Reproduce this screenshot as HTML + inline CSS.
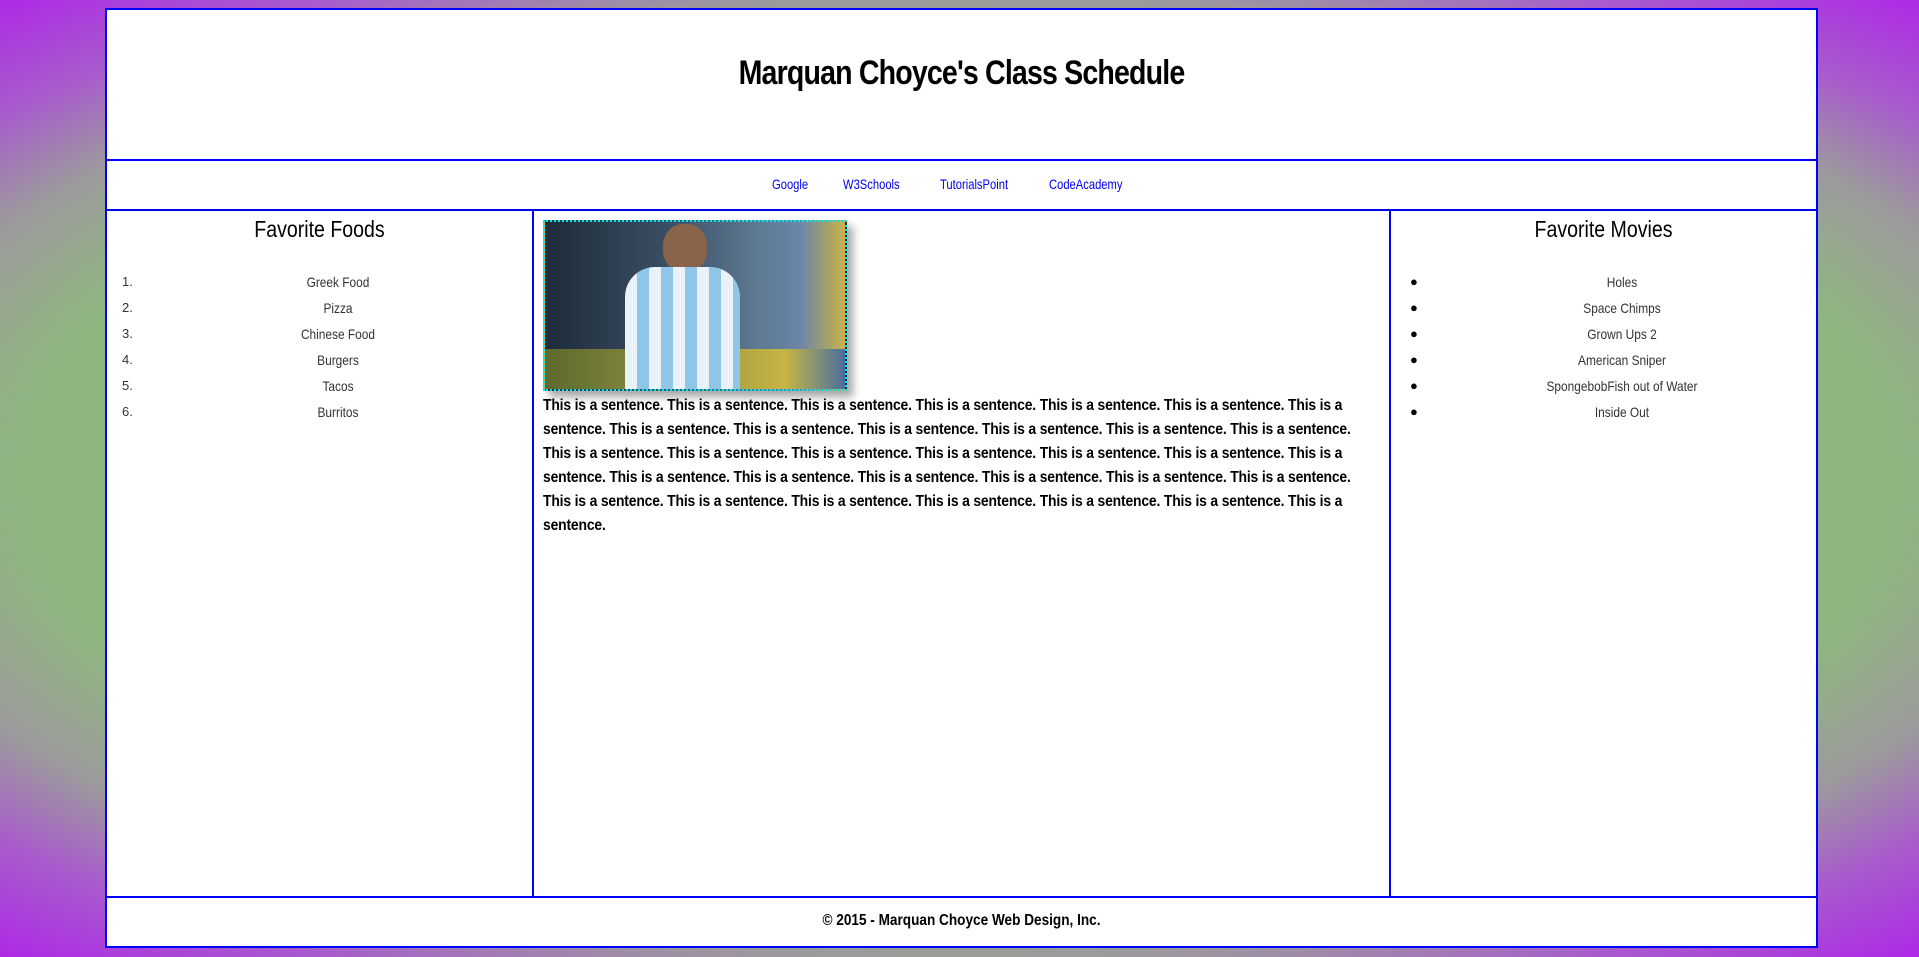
<!DOCTYPE html>
<html><head><meta charset="utf-8"><style>
*{margin:0;padding:0;box-sizing:border-box}
html,body{width:1919px;height:957px;overflow:hidden}
body{background:radial-gradient(1300px 560px at 50% 50%,#8cbc7c 0%,#8fb67f 72%,#9c9a9c 86%,#a85ccc 98%,#ae22ea 115%);position:relative;font-family:"Liberation Sans",sans-serif}
.b{position:absolute;background:#fff;border:2px solid #0000ff}
.hand{font-family:"Liberation Sans",sans-serif;color:#333}
</style></head><body>
<div class="b" style="left:105px;top:8px;width:1713px;height:153px"></div>
<div style="position:absolute;left:105px;top:54px;width:1713px;text-align:center;font-weight:bold;font-size:34px;letter-spacing:-1px;transform:scaleX(0.84);">Marquan Choyce's Class Schedule</div>
<div class="b" style="left:105px;top:159px;width:1713px;height:52px"></div>
<div style="position:absolute;top:176px;left:0;width:1919px;font-size:14px;color:#0000ee;text-decoration:underline">
<span style="position:absolute;left:772px;transform:scaleX(.8);transform-origin:left">Google</span>
<span style="position:absolute;left:843px;transform:scaleX(.8);transform-origin:left">W3Schools</span>
<span style="position:absolute;left:940px;transform:scaleX(.8);transform-origin:left">TutorialsPoint</span>
<span style="position:absolute;left:1049px;transform:scaleX(.8);transform-origin:left">CodeAcademy</span>
</div>
<div class="b" style="left:105px;top:209px;width:429px;height:689px"></div>
<div class="b" style="left:532px;top:209px;width:859px;height:689px"></div>
<div class="b" style="left:1389px;top:209px;width:429px;height:689px"></div>
<div class="hand" style="position:absolute;left:107px;width:425px;top:216px;text-align:center;font-size:23px;color:#000;transform:scaleX(.85)">Favorite Foods</div>
<div class="hand" style="position:absolute;left:1391px;width:425px;top:216px;text-align:center;font-size:23px;color:#000;transform:scaleX(.85)">Favorite Movies</div>
<div class="hand" style="position:absolute;left:122px;top:269px;font-size:13px;line-height:26px">
<div>1.</div><div>2.</div><div>3.</div><div>4.</div><div>5.</div><div>6.</div></div>
<div class="hand" style="position:absolute;left:138px;width:400px;top:269px;font-size:14px;line-height:26px;text-align:center;transform:scaleX(.85)">
<div>Greek Food</div><div>Pizza</div><div>Chinese Food</div><div>Burgers</div><div>Tacos</div><div>Burritos</div></div>
<div style="position:absolute;left:1410px;top:269px;font-size:13px;line-height:26px">
<div>●</div><div>●</div><div>●</div><div>●</div><div>●</div><div>●</div></div>
<div class="hand" style="position:absolute;left:1422px;width:400px;top:269px;font-size:14px;line-height:26px;text-align:center;transform:scaleX(.85)">
<div>Holes</div><div>Space Chimps</div><div>Grown Ups 2</div><div>American Sniper</div><div>SpongebobFish out of Water</div><div>Inside Out</div></div>
<div style="position:absolute;left:543px;top:220px;width:304px;height:171px;border:2px dotted #00e5ee;box-shadow:6px 6px 8px rgba(0,0,0,.35);overflow:hidden;background:linear-gradient(90deg,#1d2b3a 0%,#3a4e63 40%,#5d7890 70%,#6a85a8 85%,#c9b24a 100%)">
<div style="position:absolute;left:0;right:0;bottom:0;height:40px;background:linear-gradient(90deg,#5d6b2e,#8a8c3e 40%,#c7b544 80%,#4a6fa0)"></div>
<div style="position:absolute;left:118px;top:2px;width:44px;height:48px;border-radius:45%;background:#8a6448"></div>
<div style="position:absolute;left:80px;top:45px;width:115px;height:130px;border-radius:30px 30px 0 0;background:repeating-linear-gradient(90deg,#e8f2f8 0 12px,#8fc6e8 12px 24px)"></div>
</div>
<div style="position:absolute;left:543px;top:394px;width:930px;font-weight:bold;font-size:16px;line-height:24px;letter-spacing:-0.2px;transform:scaleX(0.87);transform-origin:left top">This is a sentence. This is a sentence. This is a sentence. This is a sentence. This is a sentence. This is a sentence. This is a sentence. This is a sentence. This is a sentence. This is a sentence. This is a sentence. This is a sentence. This is a sentence. This is a sentence. This is a sentence. This is a sentence. This is a sentence. This is a sentence. This is a sentence. This is a sentence. This is a sentence. This is a sentence. This is a sentence. This is a sentence. This is a sentence. This is a sentence. This is a sentence. This is a sentence. This is a sentence. This is a sentence. This is a sentence. This is a sentence. This is a sentence.</div>
<div class="b" style="left:105px;top:896px;width:1713px;height:52px"></div>
<div style="position:absolute;left:105px;width:1713px;top:912px;text-align:center;font-weight:bold;font-size:16px;transform:scaleX(.85)">© 2015 - Marquan Choyce Web Design, Inc.</div>
</body></html>
